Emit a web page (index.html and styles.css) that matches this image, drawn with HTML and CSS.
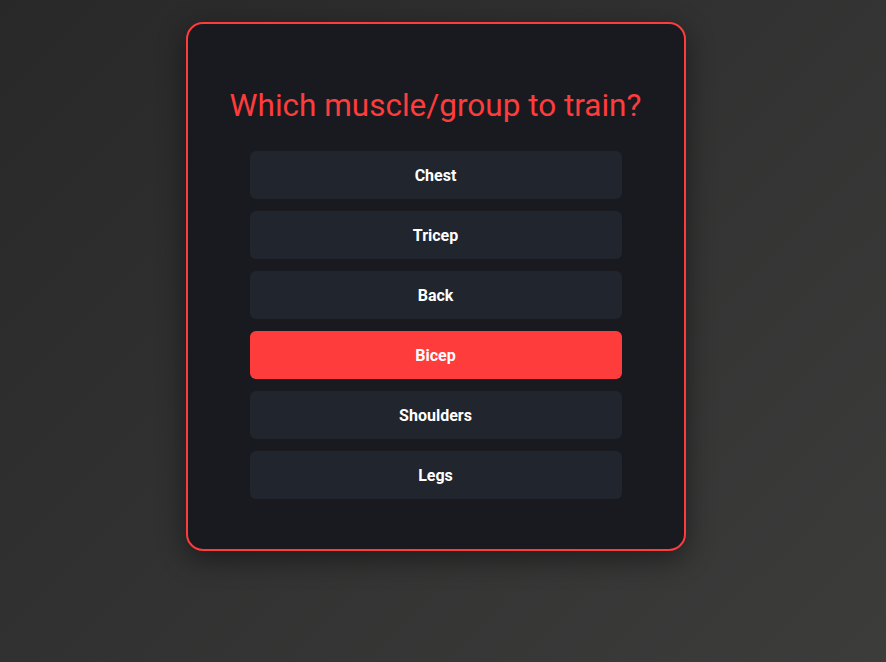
FILE: index.html
```html
<!DOCTYPE html>
<html lang="en">
<head>
<meta charset="utf-8">
<title>Muscle group</title>
<link rel="stylesheet" href="styles.css">
</head>
<body>
<main class="page">
  <section class="card">
    <h1 class="title">Which muscle/group to train?</h1>
    <div class="options">
      <button class="option">Chest</button>
      <button class="option">Tricep</button>
      <button class="option">Back</button>
      <button class="option option--active">Bicep</button>
      <button class="option">Shoulders</button>
      <button class="option">Legs</button>
    </div>
  </section>
</main>
</body>
</html>
```
FILE: styles.css
```css
* { box-sizing: border-box; }
html, body { margin: 0; height: 100%; }
body {
  background: linear-gradient(135deg, #282828 0%, #323232 50%, #3c3c3b 100%);
  font-family: Roboto, "Noto Sans", "Liberation Sans", sans-serif;
}
.page {
  display: flex;
  justify-content: center;
  padding: 22px 15px 0 0;
}
.card {
  width: 500px;
  height: 529px;
  background: #181a1f;
  border: 2px solid #ff3c3c;
  border-radius: 17px;
  box-shadow: 0 8px 28px rgba(0, 0, 0, 0.45);
  display: flex;
  flex-direction: column;
  align-items: center;
  padding-top: 63px;
}
.title {
  margin: 0 0 26px;
  color: #ff3c3c;
  font-weight: 400;
  font-size: 31.5px;
  line-height: 38px;
  text-align: center;
}
.options {
  width: 75%;
  display: flex;
  flex-direction: column;
  gap: 12px;
}
.option {
  height: 48px;
  border: 0;
  border-radius: 6px;
  background: #21252d;
  color: #ffffff;
  font-family: Roboto, "Noto Sans", "Liberation Sans", sans-serif;
  font-weight: 700;
  font-size: 16px;
  text-align: center;
  padding: 0;
}
.option--active { background: #ff3c3c; }
```
